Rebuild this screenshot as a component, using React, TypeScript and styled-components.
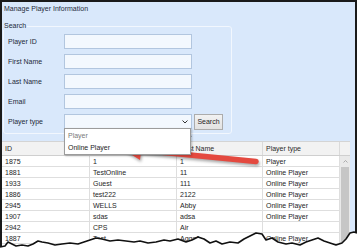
import React from 'react';
import styled, { createGlobalStyle } from 'styled-components';

const GlobalStyle = createGlobalStyle`
  html, body {
    margin: 0;
    padding: 0;
    background: #ffffff;
  }
  * {
    box-sizing: border-box;
  }
`;

const players = [
  { id: '1875', last: '1', first: '1', type: 'Player' },
  { id: '1881', last: 'TestOnline', first: '11', type: 'Online Player' },
  { id: '1933', last: 'Guest', first: '111', type: 'Online Player' },
  { id: '1886', last: 'test222', first: '2122', type: 'Online Player' },
  { id: '2945', last: 'WELLS', first: 'Abby', type: 'Online Player' },
  { id: '1907', last: 'sdas', first: 'adsa', type: 'Online Player' },
  { id: '2942', last: 'CPS', first: 'Air', type: '' },
  { id: '1887', last: 'Test', first: 'Aggg1', type: 'Online Player' },
  { id: '1890', last: 'Tester', first: 'Bob', type: 'Online Player' },
];

const columns = [88, 87, 86, 77];

const tornLine = [
  [0, 247], [5, 246], [8, 242], [12, 244], [16, 246], [22, 245], [28, 246], [33, 244],
  [38, 241], [42, 242], [48, 243], [55, 245], [62, 244], [70, 243], [78, 244], [84, 242],
  [90, 240], [96, 238], [102, 239], [110, 241], [118, 240], [126, 241], [134, 242], [140, 241],
  [148, 243], [156, 242], [164, 240], [170, 241], [178, 239], [186, 242], [192, 240], [198, 237],
  [204, 239], [210, 243], [216, 241], [222, 244], [230, 242], [238, 243], [244, 239], [250, 236],
  [256, 233], [262, 234], [266, 240], [272, 238], [278, 242], [286, 244], [292, 243], [300, 245],
  [306, 242], [312, 240], [318, 238], [324, 241], [330, 243], [336, 245], [342, 243], [346, 239],
  [350, 233], [354, 232], [357, 233],
];

export default function App() {
  const linePoints = tornLine.map(([x, y]) => `${x},${y}`).join(' ');

  return (
    <>
      <GlobalStyle />
      <Page>
        <Window>
          <Title>Manage Player Information</Title>

          <GroupBox>
            <Legend>Search</Legend>
            <FormGrid>
              <Label>Player ID</Label>
              <TextInput readOnly />
              <span />

              <Label>First Name</Label>
              <TextInput readOnly />
              <span />

              <Label>Last Name</Label>
              <TextInput readOnly />
              <span />

              <Label>Email</Label>
              <TextInput readOnly />
              <span />

              <Label>Player type</Label>
              <SelectBox>
                <svg width="6" height="4" viewBox="0 0 6 4">
                  <path d="M0.5 0.5 L3 3 L5.5 0.5" fill="none" stroke="#333" strokeWidth="1" />
                </svg>
                <DropList>
                  <DropItem $muted>Player</DropItem>
                  <DropItem>Online Player</DropItem>
                </DropList>
              </SelectBox>
              <SearchButton type="button">Search</SearchButton>
            </FormGrid>
          </GroupBox>

          <Table>
            <HeaderRow>
              <HeaderCell $w={columns[0]}>ID</HeaderCell>
              {/* hidden under the open drop-down in the screenshot */}
              <HeaderCell $w={columns[1]} />
              <HeaderCell $w={columns[2]}>First Name</HeaderCell>
              <HeaderCell $w={columns[3]}>Player type</HeaderCell>
              <HeaderFiller />
            </HeaderRow>
            <Body>
              <Rows>
                {players.map((p) => (
                  <Row key={p.id}>
                    <Cell $w={columns[0]}>{p.id}</Cell>
                    <Cell $w={columns[1]}>{p.last}</Cell>
                    <Cell $w={columns[2]}>{p.first}</Cell>
                    <Cell $w={columns[3]}>{p.type}</Cell>
                  </Row>
                ))}
              </Rows>
              <Scrollbar>
                <ScrollUp>
                  <svg width="5" height="3" viewBox="0 0 5 3">
                    <path d="M0.5 2.5 L2.5 0.5 L4.5 2.5" fill="none" stroke="#9a9a9a" strokeWidth="0.8" />
                  </svg>
                </ScrollUp>
                <ScrollThumb />
              </Scrollbar>
            </Body>
          </Table>
        </Window>

        <Overlay width="357" height="252" viewBox="0 0 357 252" $shadow>
          <line x1="256" y1="161.5" x2="139" y2="150" stroke="#e4493f" strokeWidth="5.5" strokeLinecap="round" />
          <polygon points="121,148 142.5,139 140,160" fill="#e4493f" />
        </Overlay>

        <Overlay width="357" height="252" viewBox="0 0 357 252">
          <path
            d="M183 128 L183 139.5 L185.8 136.8 L188 141.5 L189.6 140.8 L187.5 136.2 L191.2 136.2 Z"
            fill="#ffffff"
            stroke="#111"
            strokeWidth="0.8"
            strokeLinejoin="round"
          />
          <polygon points={`${linePoints} 357,252 0,252`} fill="#ffffff" />
          <polyline points={linePoints} fill="none" stroke="#111" strokeWidth="1.6" strokeLinejoin="round" />
        </Overlay>
      </Page>
    </>
  );
}

const Page = styled.div`
  position: relative;
  width: 357px;
  height: 252px;
  overflow: hidden;
  background: #ffffff;
  font-family: "Liberation Sans", Arial, sans-serif;
  font-size: 7px;
  color: #1e1e1e;
`;

const Window = styled.div`
  width: 357px;
  height: 252px;
  border: 2px solid #1a1a1a;
  border-bottom: 0;
  background: #d9e8fb;
  display: flex;
  flex-direction: column;
`;

const Title = styled.div`
  height: 14px;
  line-height: 14px;
  padding-left: 2px;
  color: #1e2a3a;
`;

const GroupBox = styled.fieldset`
  width: 229px;
  min-width: 0;
  margin: 6px 0 0 1px;
  padding: 4px 0 4px 1px;
  border: 1px solid #f2f7fe;
  border-radius: 3px;
`;

const Legend = styled.legend`
  font-size: 7px;
  line-height: 8px;
  padding: 0 1px;
  margin-left: -2px;
  color: #1e2a3a;
`;

const FormGrid = styled.div`
  display: grid;
  grid-template-columns: 57px 128px 29px;
  grid-auto-rows: 15px;
  column-gap: 2px;
  row-gap: 5px;
  align-items: center;
`;

const Label = styled.span`
  padding-left: 3px;
  line-height: 15px;
  color: #1e2a3a;
`;

const TextInput = styled.input`
  width: 128px;
  height: 15px;
  margin: 0;
  padding: 0 3px;
  border: 1px solid #b2c6df;
  background: #f3f8fe;
  font: inherit;
  outline: none;
`;

const SelectBox = styled.div`
  position: relative;
  height: 15px;
  border: 1px solid #b2c6df;
  background: #f3f8fe;
  display: flex;
  align-items: center;
  justify-content: flex-end;
  padding-right: 3px;
`;

const DropList = styled.div`
  position: absolute;
  top: 100%;
  left: -1px;
  width: 127px;
  padding-top: 1px;
  background: #ffffff;
  border: 1px solid #9c9c9c;
  box-shadow: 1px 1px 2px rgba(0, 0, 0, 0.25);
  display: flex;
  flex-direction: column;
  z-index: 2;
`;

const DropItem = styled.div<{ $muted?: boolean }>`
  height: 12px;
  line-height: 12px;
  padding-left: 3px;
  color: ${p => (p.$muted ? '#7a7a7a' : '#1e1e1e')};
`;

const SearchButton = styled.button`
  height: 16px;
  margin: 0;
  padding: 0;
  border: 1px solid #acacac;
  background: linear-gradient(#f2f2f2, #e2e2e2);
  font: inherit;
  color: #1e1e1e;
`;

const Table = styled.div`
  width: 348px;
  margin-top: 7px;
  background: #ffffff;
  display: flex;
  flex-direction: column;
  flex: 1;
`;

const HeaderRow = styled.div`
  display: flex;
  height: 15px;
  background: #f2f2f2;
  border-top: 1px solid #d4d4d4;
  border-bottom: 1px solid #cfcfcf;
`;

const HeaderCell = styled.div<{ $w: number }>`
  width: ${p => p.$w}px;
  padding-left: 3px;
  line-height: 14px;
  border-right: 1px solid #dadada;
  color: #2a2a2a;
  white-space: nowrap;
  overflow: hidden;
`;

const HeaderFiller = styled.div`
  flex: 1;
`;

const Body = styled.div`
  display: flex;
  flex: 1;
`;

const Rows = styled.div`
  width: 338px;
  display: flex;
  flex-direction: column;
`;

const Row = styled.div`
  display: flex;
  height: 11px;
  border-bottom: 1px solid #dedede;
`;

const Cell = styled.div<{ $w: number }>`
  width: ${p => p.$w}px;
  padding-left: 3px;
  line-height: 11px;
  border-right: 1px solid #dedede;
  white-space: nowrap;
  overflow: hidden;
`;

const Scrollbar = styled.div`
  width: 10px;
  background: #e9e9e9;
  display: flex;
  flex-direction: column;
  align-items: center;
`;

const ScrollUp = styled.div`
  height: 11px;
  display: flex;
  align-items: center;
  justify-content: center;
`;

const ScrollThumb = styled.div`
  width: 8px;
  flex: 1;
  background: #c6c6c6;
`;

const Overlay = styled.svg<{ $shadow?: boolean }>`
  position: absolute;
  left: 0;
  top: 0;
  pointer-events: none;
  filter: ${p => (p.$shadow ? 'drop-shadow(1px 2px 1.5px rgba(0, 0, 0, 0.35))' : 'none')};
`;
